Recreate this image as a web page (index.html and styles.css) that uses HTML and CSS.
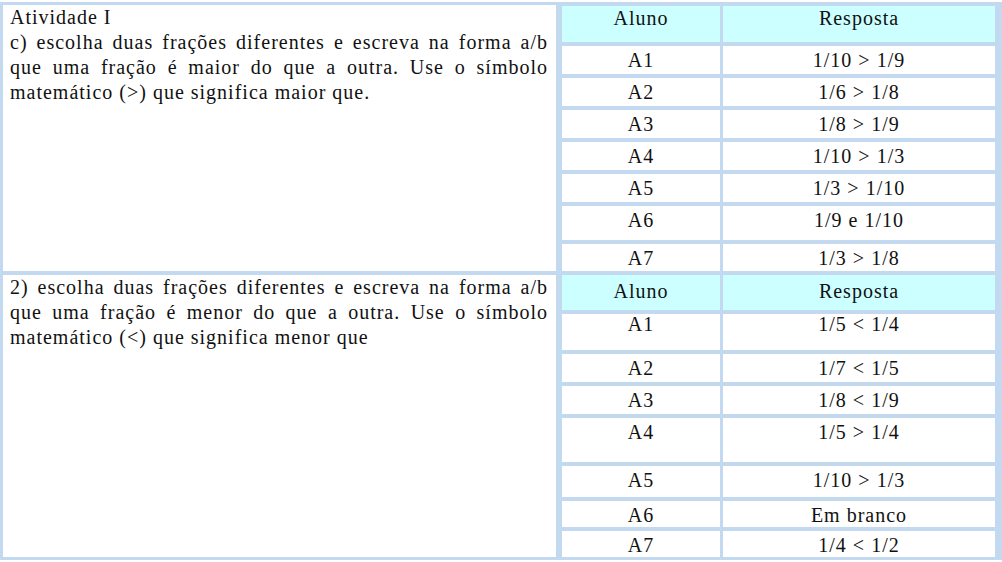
FILE: index.html
```html
<!DOCTYPE html>
<html lang="pt">
<head>
<meta charset="utf-8">
<title>Atividade I</title>
<link rel="stylesheet" href="styles.css">
</head>
<body>
<div class="sheet">
  <section class="block">
    <div class="question">
      <p>Atividade I</p>
      <p class="just">c) escolha duas frações diferentes e escreva na forma a/b que uma fração é maior do que a outra. Use o símbolo matemático (&gt;) que significa maior que.</p>
    </div>
    <div class="answers">
      <div class="cell head">Aluno</div><div class="cell head">Resposta</div>
      <div class="cell">A1</div><div class="cell">1/10 &gt; 1/9</div>
      <div class="cell">A2</div><div class="cell">1/6 &gt; 1/8</div>
      <div class="cell">A3</div><div class="cell">1/8 &gt; 1/9</div>
      <div class="cell">A4</div><div class="cell">1/10 &gt; 1/3</div>
      <div class="cell">A5</div><div class="cell">1/3 &gt; 1/10</div>
      <div class="cell">A6</div><div class="cell">1/9 e 1/10</div>
      <div class="cell">A7</div><div class="cell">1/3 &gt; 1/8</div>
    </div>
  </section>
  <section class="block">
    <div class="question">
      <p class="just">2) escolha duas frações diferentes e escreva na forma a/b que uma fração é menor do que a outra. Use o símbolo matemático (&lt;) que significa menor que</p>
    </div>
    <div class="answers second">
      <div class="cell head">Aluno</div><div class="cell head">Resposta</div>
      <div class="cell lift">A1</div><div class="cell lift">1/5 &lt; 1/4</div>
      <div class="cell">A2</div><div class="cell">1/7 &lt; 1/5</div>
      <div class="cell">A3</div><div class="cell">1/8 &lt; 1/9</div>
      <div class="cell">A4</div><div class="cell">1/5 &gt; 1/4</div>
      <div class="cell">A5</div><div class="cell">1/10 &gt; 1/3</div>
      <div class="cell">A6</div><div class="cell">Em branco</div>
      <div class="cell">A7</div><div class="cell">1/4 &lt; 1/2</div>
    </div>
  </section>
</div>
</body>
</html>
```

FILE: styles.css
```css
html, body {
  margin: 0;
  padding: 0;
  background: #ffffff;
}
body {
  padding-top: 2px;
  font-family: "Liberation Serif", "Times New Roman", serif;
  font-size: 20px;
  letter-spacing: 1px;
  color: #111111;
  overflow: hidden;
}
.sheet {
  width: 1010px;
  background: #c2d9ef;
  padding: 3px 0 3px 3px;
  display: flex;
  flex-direction: column;
  gap: 4px;
}
.block {
  display: grid;
  grid-template-columns: 553px 440px;
  column-gap: 6px;
}
.question {
  background: #ffffff;
  padding: 0 8px 0 7px;
  line-height: 25px;
}
.question p {
  margin: 0;
}
.just {
  text-align: justify;
}
.answers {
  display: grid;
  grid-template-columns: 158px 272px;
  grid-template-rows: 36px repeat(5, 28px) 34px 27px;
  column-gap: 3px;
  row-gap: 4px;
  padding-top: 1px;
}
.second {
  grid-template-rows: 35px 36px 28px 28px 44px 31px 26px 26px;
  padding-top: 0;
}
.cell {
  background: #ffffff;
  text-align: center;
  line-height: 24px;
  padding-top: 2px;
}
.head {
  background: #ccffff;
  padding-top: 0;
  line-height: 25px;
}
.second .head {
  padding-top: 4px;
}
.lift {
  padding-top: 0;
  line-height: 20px;
}
```
